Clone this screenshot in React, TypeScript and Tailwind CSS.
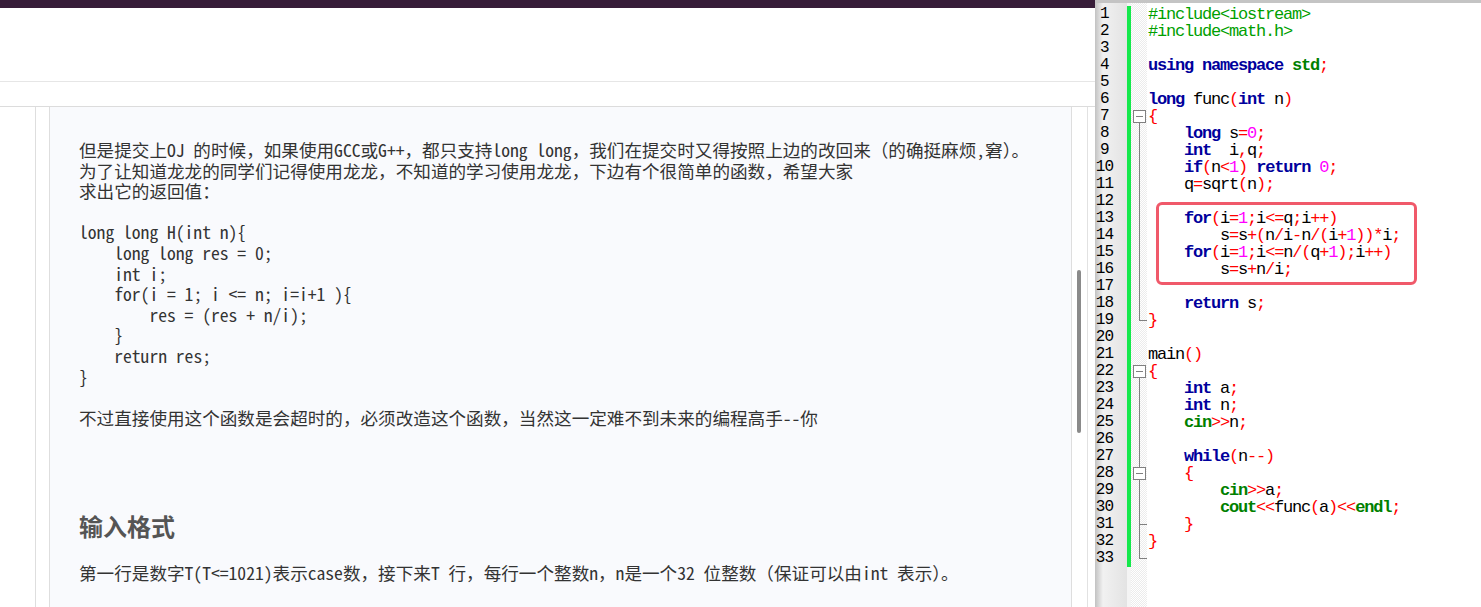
import React from 'react';

type Tok = [string, string];

const K = 'text-[#00009c] font-bold';
const G = 'text-[#008000] font-bold';
const R = 'text-[#ff0000]';
const M = 'text-[#ff00ff]';
const P = 'text-black';
const I = 'text-[#00a000]';

// source shown in the editor, one array of tokens per line
const code: Tok[][] = [
  [['#include<iostream>', I]],
  [['#include<math.h>', I]],
  [],
  [['using', K], [' ', P], ['namespace', K], [' ', P], ['std', G], [';', R]],
  [],
  [['long', K], [' func', P], ['(', R], ['int', K], [' n', P], [')', R]],
  [['{', R]],
  [['    ', P], ['long', K], [' s', P], ['=', R], ['0', M], [';', R]],
  [['    ', P], ['int', K], ['  i', P], [',', R], ['q', P], [';', R]],
  [['    ', P], ['if', K], ['(', R], ['n', P], ['<', R], ['1', M], [')', R], [' ', P], ['return', K], [' ', P], ['0', M], [';', R]],
  [['    q', P], ['=', R], ['sqrt', P], ['(', R], ['n', P], [')', R], [';', R]],
  [],
  [['    ', P], ['for', K], ['(', R], ['i', P], ['=', R], ['1', M], [';', R], ['i', P], ['<=', R], ['q', P], [';', R], ['i', P], ['++', R], [')', R]],
  [['        s', P], ['=', R], ['s', P], ['+(', R], ['n', P], ['/', R], ['i', P], ['-', R], ['n', P], ['/(', R], ['i', P], ['+', R], ['1', M], ['))*', R], ['i', P], [';', R]],
  [['    ', P], ['for', K], ['(', R], ['i', P], ['=', R], ['1', M], [';', R], ['i', P], ['<=', R], ['n', P], ['/(', R], ['q', P], ['+', R], ['1', M], [');', R], ['i', P], ['++)', R]],
  [['        s', P], ['=', R], ['s', P], ['+', R], ['n', P], ['/', R], ['i', P], [';', R]],
  [],
  [['    ', P], ['return', K], [' s', P], [';', R]],
  [['}', R]],
  [],
  [['main', P], ['()', R]],
  [['{', R]],
  [['    ', P], ['int', K], [' a', P], [';', R]],
  [['    ', P], ['int', K], [' n', P], [';', R]],
  [['    ', P], ['cin', G], ['>>', R], ['n', P], [';', R]],
  [],
  [['    ', P], ['while', K], ['(', R], ['n', P], ['--', R], [')', R]],
  [['    {', R]],
  [['        ', P], ['cin', G], ['>>', R], ['a', P], [';', R]],
  [['        ', P], ['cout', G], ['<<', R], ['func', P], ['(', R], ['a', P], [')', R], ['<<', R], ['endl', G], [';', R]],
  [['    }', R]],
  [['}', R]],
  [],
];

// fold markers per line number
const folds: Record<number, string> = {
  7: 'box', 19: 'end', 22: 'box', 28: 'midbox', 31: 'tick', 33: 'end',
};
for (let i = 8; i <= 18; i++) folds[i] = 'line';
for (const i of [23, 24, 25, 26, 27, 29, 30, 32]) folds[i] = 'line';

function Fold({ kind }: { kind?: string }) {
  if (!kind) return <div className="h-[17px]" />;
  return (
    <svg width="16" height="17" className="block" shapeRendering="crispEdges">
      {kind === 'line' && <line x1="8.5" y1="0" x2="8.5" y2="17" stroke="#808080" />}
      {kind === 'tick' && (
        <>
          <line x1="8.5" y1="0" x2="8.5" y2="17" stroke="#808080" />
          <line x1="8.5" y1="8.5" x2="16" y2="8.5" stroke="#808080" />
        </>
      )}
      {kind === 'end' && (
        <>
          <line x1="8.5" y1="0" x2="8.5" y2="8.5" stroke="#808080" />
          <line x1="8.5" y1="8.5" x2="16" y2="8.5" stroke="#808080" />
        </>
      )}
      {(kind === 'box' || kind === 'midbox') && (
        <>
          {kind === 'midbox' && <line x1="8.5" y1="0" x2="8.5" y2="2.5" stroke="#808080" />}
          <rect x="2.5" y="2.5" width="12" height="12" fill="#ffffff" stroke="#808080" />
          <line x1="5" y1="8.5" x2="12" y2="8.5" stroke="#808080" />
          <line x1="8.5" y1="14.5" x2="8.5" y2="17" stroke="#808080" />
        </>
      )}
    </svg>
  );
}

const problemText = `但是提交上OJ 的时候，如果使用GCC或G++，都只支持long long，我们在提交时又得按照上边的改回来（的确挺麻烦,窘）。
为了让知道龙龙的同学们记得使用龙龙，不知道的学习使用龙龙，下边有个很简单的函数，希望大家
求出它的返回值：

long long H(int n){
    long long res = 0;
    int i;
    for(i = 1; i <= n; i=i+1 ){
        res = (res + n/i);
    }
    return res;
}

不过直接使用这个函数是会超时的，必须改造这个函数，当然这一定难不到未来的编程高手--你`;

const bodyFont = "font-['Noto_Sans_Mono_CJK_SC','Noto_Sans_CJK_SC',monospace]";

export default function App() {
  return (
    <div className="flex w-[1481px] h-[607px] overflow-hidden bg-white">
      {/* browser page */}
      <div className="flex flex-col w-[1095px] h-full">
        <div className="h-[8px] bg-[#371d39]" />
        <div className="h-[74px] bg-white border-b border-[#e6e6e6]" />
        <div className="h-[24px] bg-white" />
        <div className="flex flex-1 border-t border-[#dcdcdc] min-h-0">
          <div className="w-[36px] border-r border-[#dedede]" />
          <div className="w-[14px] border-r border-[#dedede]" />
          <div className="flex-1 bg-[#f9fafd] border-r border-[#dedede] pl-[29px] pt-[33px] text-[#333333]">
            <div className={`${bodyFont} text-[17.6px] leading-[20.6px] whitespace-pre-wrap`}>{problemText}</div>
            <h3 className="mt-[82px] font-['Noto_Sans_CJK_SC',sans-serif] text-[24px] leading-[32px] font-bold text-[#555555]">
              输入格式
            </h3>
            <div className={`${bodyFont} mt-[21px] text-[17.6px] leading-[20.6px] whitespace-pre`}>
              第一行是数字T(T&lt;=1021)表示case数，接下来T 行，每行一个整数n，n是一个32 位整数（保证可以由int 表示）。
            </div>
          </div>
          <div className="w-[16px] border-r border-[#e2e2e2] pl-[5px] pt-[163px]">
            <div className="w-[4px] h-[163px] rounded-full bg-[#8a8a8a]" />
          </div>
          <div className="w-[7px]" />
        </div>
      </div>

      {/* code editor */}
      <div className="flex flex-col flex-1 h-full">
        <div className="h-[3px] bg-[#c4c4c4]" />
        <div className="relative flex flex-1 font-['Liberation_Mono',monospace] text-[17px] tracking-[-1.2px] leading-[17px]">
          <div className="w-[32px] pt-[2.5px] bg-linear-to-r from-[#c2c2c2] via-[#f1f1f1] via-25% to-[#e3e3e3]">
            {code.map((_, i) => (
              <div key={i} className="h-[17px] w-[19px] text-center text-black text-[16px] leading-[17px] tracking-[-0.8px]">
                {i + 1}
              </div>
            ))}
          </div>
          <div className="w-[4px] pt-[2.5px] bg-[#f4f4f4]">
            <div className="h-[561px] bg-[#14e84b]" />
          </div>
          <div className="w-[16px] pt-[2.5px] bg-[repeating-conic-gradient(#ececec_0_25%,#ffffff_0_50%)] bg-size-[2px_2px]">
            {code.map((_, i) => (
              <Fold key={i} kind={folds[i + 1]} />
            ))}
          </div>
          <div className="flex-1 bg-white pt-[2.5px] pl-[1px]">
            {code.map((line, i) => (
              <div key={i} className="h-[17px] whitespace-pre">
                {line.map(([t, c], j) => (
                  <span key={j} className={c}>
                    {t}
                  </span>
                ))}
              </div>
            ))}
          </div>
          <div className="absolute left-[61px] top-[199px] w-[261px] h-[83px] border-[3px] border-[#f0596a] rounded-[6px]" />
        </div>
      </div>
    </div>
  );
}
